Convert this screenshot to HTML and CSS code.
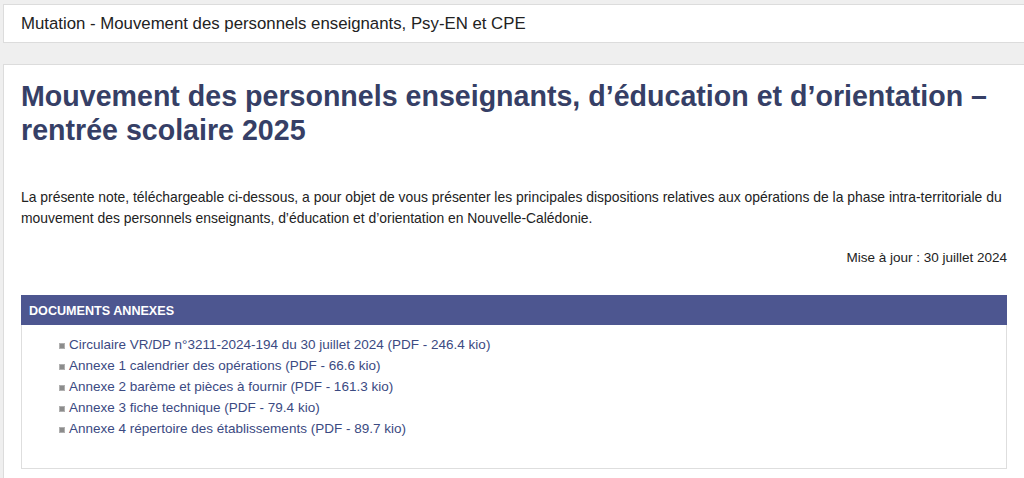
FILE: index.html
```html
<!DOCTYPE html>
<html lang="fr">
<head>
<meta charset="utf-8">
<title>Mutation</title>
<link rel="stylesheet" href="styles.css">
</head>
<body>
<div class="page">
  <div class="topbar">Mutation - Mouvement des personnels enseignants, Psy-EN et CPE</div>
  <div class="card">
    <h1 class="title">Mouvement des personnels enseignants, d’éducation et d’orientation – rentrée scolaire 2025</h1>
    <p class="intro">La présente note, téléchargeable ci-dessous, a pour objet de vous présenter les principales dispositions relatives aux opérations de la phase intra-territoriale du mouvement des personnels enseignants, d’éducation et d’orientation en Nouvelle-Calédonie.</p>
    <p class="update">Mise à jour : 30 juillet 2024</p>
    <div class="docs">
      <div class="docs-head">DOCUMENTS ANNEXES</div>
      <ul class="docs-list">
        <li><span class="bullet"></span><a href="#">Circulaire VR/DP n°3211-2024-194 du 30 juillet 2024 (PDF - 246.4 kio)</a></li>
        <li><span class="bullet"></span><a href="#">Annexe 1 calendrier des opérations (PDF - 66.6 kio)</a></li>
        <li><span class="bullet"></span><a href="#">Annexe 2 barème et pièces à fournir (PDF - 161.3 kio)</a></li>
        <li><span class="bullet"></span><a href="#">Annexe 3 fiche technique (PDF - 79.4 kio)</a></li>
        <li><span class="bullet"></span><a href="#">Annexe 4 répertoire des établissements (PDF - 89.7 kio)</a></li>
      </ul>
    </div>
  </div>
</div>
</body>
</html>
```

FILE: styles.css
```css
html, body {
  margin: 0;
  padding: 0;
  background: #efefef;
  font-family: "Liberation Sans", Arial, Helvetica, sans-serif;
  color: #222;
  overflow: hidden;
}
.page {
  padding: 4px 0 0 3px;
}
.topbar {
  background: #fff;
  border: 1px solid #dcdcdc;
  border-right: none;
  height: 39px;
  box-sizing: border-box;
  padding: 10px 0 0 17px;
  font-size: 16.8px;
  line-height: 18px;
}
.card {
  margin-top: 21px;
  background: #fff;
  border: 1px solid #dcdcdc;
  border-right: none;
  padding: 14px 17px 20px 17px;
}
.title {
  margin: 0;
  font-size: 28.6px;
  line-height: 34px;
  font-weight: bold;
  color: #363f66;
  padding-right: 10px;
}
.intro {
  margin: 40px 0 0 0;
  font-size: 13.9px;
  line-height: 21px;
  padding-right: 4px;
}
.update {
  margin: 21px 0 0 0;
  font-size: 13.5px;
  line-height: 16px;
  text-align: right;
}
.docs {
  margin-top: 29px;
  border: 1px solid #dedede;
  border-top: none;
  padding-bottom: 29px;
}
.docs-head {
  background: #4d5690;
  color: #fff;
  font-weight: bold;
  font-size: 12.6px;
  line-height: 14px;
  padding: 9px 8px 7px 8px;
  margin: 0 -1px;
}
.docs-list {
  list-style: none;
  margin: 9px 0 0 0;
  padding: 0 0 0 37px;
}
.docs-list li {
  font-size: 13.5px;
  line-height: 21px;
  display: flex;
  align-items: center;
}
.bullet {
  width: 4px;
  height: 4px;
  background: #8c8c8c;
  border: 1px solid #b0b0b0;
  margin: 3px 4px 0 0;
  flex: none;
}
.docs-list a {
  color: #3b4a82;
  text-decoration: none;
}
```
